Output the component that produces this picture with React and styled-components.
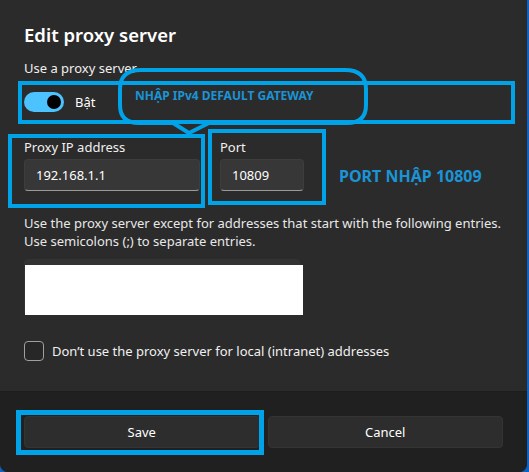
import React from 'react';
import styled, { createGlobalStyle } from 'styled-components';

const GlobalStyle = createGlobalStyle`
  body {
    margin: 0;
    background: #0a64c8;
    font-family: "Noto Sans", "Open Sans", sans-serif;
  }
`;

const ACCENT = '#00a2e8';

// khung hộp thoại
const Dialog = styled.div`
  width: 527px;
  height: 472px;
  background: #2b2b2b;
  border-bottom-left-radius: 8px;
  border-bottom-right-radius: 8px;
  overflow: hidden;
  display: flex;
  flex-direction: column;
  position: relative;
  color: #ffffff;
`;

const Body = styled.div`
  padding: 22px 24px 0;
  flex: 1;
`;

const Title = styled.h2`
  margin: 0;
  font-size: 18.5px;
  line-height: 26px;
  font-weight: 600;
`;

const Label = styled.div`
  font-size: 13px;
  line-height: 18px;
  color: #f0f0f0;
  margin-top: ${(p) => p.$top || 0}px;
`;

// viền xanh đánh dấu
const Marked = styled.div`
  position: relative;
  &::after {
    content: '';
    position: absolute;
    top: ${(p) => p.$t}px;
    right: ${(p) => p.$r}px;
    bottom: ${(p) => p.$b}px;
    left: ${(p) => p.$l}px;
    border: ${(p) => p.$w || 4}px solid ${ACCENT};
    pointer-events: none;
  }
`;

const ToggleRow = styled.div`
  display: flex;
  align-items: center;
  gap: 11px;
  margin-top: 15px;
  width: 72px;
  height: 20px;
`;

const Switch = styled.div`
  width: 40px;
  height: 20px;
  border-radius: 10px;
  background: #4cc2ff;
  display: flex;
  align-items: center;
  justify-content: flex-end;
  padding-right: 3px;
  box-sizing: border-box;
`;

const Knob = styled.div`
  width: 14px;
  height: 14px;
  border-radius: 50%;
  background: #000;
`;

const ToggleText = styled.span`
  font-size: 13px;
`;

const FieldsRow = styled.div`
  display: flex;
  align-items: flex-end;
  gap: 20px;
  margin-top: 26px;
`;

const Field = styled.div`
  display: flex;
  flex-direction: column;
  gap: 3px;
  width: ${(p) => p.$width}px;
`;

const Input = styled.div`
  height: 32px;
  box-sizing: border-box;
  background: #373737;
  border: 1px solid #3d3d3d;
  border-bottom: 1px solid #9a9a9a;
  border-radius: 4px;
  padding: 0 11px;
  display: flex;
  align-items: center;
  font-size: 13px;
  color: #ffffff;
`;

const PortNote = styled.div`
  color: #1a94d6;
  font-weight: 700;
  font-size: 16px;
  margin-left: 15px;
  align-self: center;
  margin-top: 22px;
`;

const Hint = styled.p`
  margin: 23px 0 0;
  font-size: 13px;
  line-height: 18px;
  color: #e8e8e8;
`;

const TextArea = styled.div`
  position: relative;
  margin-top: 9px;
  width: 276px;
  height: 56px;
  background: #333333;
  border-radius: 4px;
`;

const Redact = styled.div`
  position: absolute;
  left: 1px;
  top: 6px;
  width: 278px;
  height: 50px;
  background: #ffffff;
`;

const CheckRow = styled.label`
  display: flex;
  align-items: center;
  gap: 8px;
  margin-top: 26px;
  font-size: 13px;
  color: #f0f0f0;
`;

const Box = styled.span`
  width: 20px;
  height: 20px;
  box-sizing: border-box;
  border: 1px solid #a0a0a0;
  border-radius: 4px;
  background: #272727;
`;

const Footer = styled.div`
  height: 81px;
  background: #202020;
  border-top: 1px solid #1d1d1d;
  box-sizing: border-box;
  padding: 24px 24px 0;
  display: grid;
  grid-template-columns: 1fr 1fr;
  gap: 8px;
  align-items: start;
`;

const Button = styled.div`
  height: 32px;
  box-sizing: border-box;
  background: #2d2d2d;
  border: 1px solid #343434;
  border-radius: 4px;
  display: flex;
  align-items: center;
  justify-content: center;
  font-size: 13px;
  color: #ffffff;
`;

// bong bóng chú thích
const Callout = styled.div`
  position: absolute;
  left: 117px;
  top: 67px;
  width: 252px;
  height: 70px;
`;

const CalloutText = styled.span`
  position: absolute;
  left: 18px;
  top: 20px;
  font-size: 12px;
  font-weight: 700;
  color: #1a94d6;
  white-space: nowrap;
`;

export default function App() {
  return (
    <>
      <GlobalStyle />
      <Dialog>
        <Body>
          <Title>Edit proxy server</Title>
          <Label $top={11}>Use a proxy server</Label>
          <Marked $t={-11} $r={-12} $b={-12} $l={-6}>
            <ToggleRow>
              <Switch>
                <Knob />
              </Switch>
              <ToggleText>Bật</ToggleText>
            </ToggleRow>
          </Marked>
          <FieldsRow>
            <Marked $t={-4} $r={-5} $b={-17} $l={-16}>
              <Field $width={176}>
                <Label>Proxy IP address</Label>
                <Input>192.168.1.1</Input>
              </Field>
            </Marked>
            <Marked $t={-9} $r={-22} $b={-14} $l={-12}>
              <Field $width={84}>
                <Label>Port</Label>
                <Input>10809</Input>
              </Field>
            </Marked>
            <PortNote>PORT NHẬP 10809</PortNote>
          </FieldsRow>
          <Hint>
            Use the proxy server except for addresses that start with the following entries.
            <br />
            Use semicolons (;) to separate entries.
          </Hint>
          <TextArea>
            <Redact />
          </TextArea>
          <CheckRow>
            <Box />
            Don’t use the proxy server for local (intranet) addresses
          </CheckRow>
        </Body>
        <Footer>
          <Marked $t={-6} $r={-4} $b={-7} $l={-8} $w={5}>
            <Button>Save</Button>
          </Marked>
          <Button>Cancel</Button>
        </Footer>
        <Callout>
          <svg width="252" height="70" viewBox="0 0 252 70" fill="none">
            <path
              d="M24 3 H228 Q249 3 249 22 V38 Q249 56 230 56 H92 L72 66 L56 56 H22 Q3 56 3 38 V22 Q3 3 24 3 Z"
              stroke={ACCENT}
              strokeWidth="4"
              strokeLinejoin="round"
            />
          </svg>
          <CalloutText>NHẬP IPv4 DEFAULT GATEWAY</CalloutText>
        </Callout>
      </Dialog>
    </>
  );
}
